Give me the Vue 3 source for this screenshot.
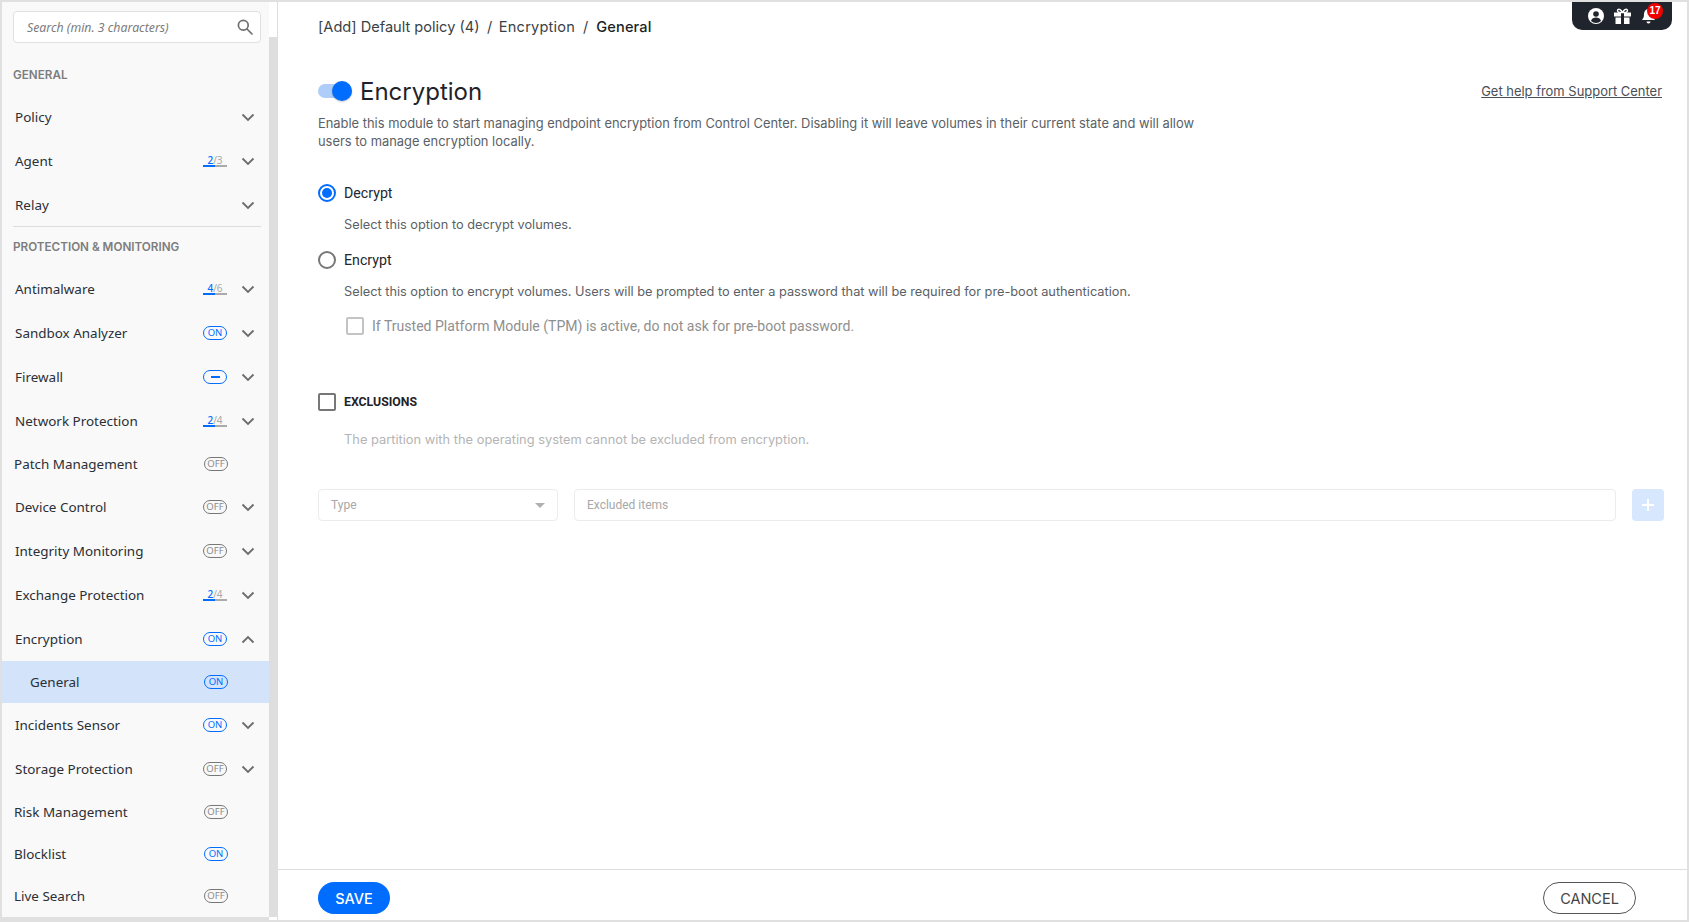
<script setup>
const general = [
  { name: 'Policy', chevron: 'down' },
  { name: 'Agent', progress: ['2', '3'], pct: 52, chevron: 'down' },
  { name: 'Relay', chevron: 'down' }
]
const protection = [
  { name: 'Antimalware', progress: ['4', '6'], pct: 52, chevron: 'down' },
  { name: 'Sandbox Analyzer', pill: 'ON', chevron: 'down' },
  { name: 'Firewall', pill: 'PART', chevron: 'down' },
  { name: 'Network Protection', progress: ['2', '4'], pct: 52, chevron: 'down' },
  { name: 'Patch Management', pill: 'OFF' },
  { name: 'Device Control', pill: 'OFF', chevron: 'down' },
  { name: 'Integrity Monitoring', pill: 'OFF', chevron: 'down' },
  { name: 'Exchange Protection', progress: ['2', '4'], pct: 52, chevron: 'down' },
  { name: 'Encryption', pill: 'ON', chevron: 'up' },
  { name: 'General', pill: 'ON', active: true },
  { name: 'Incidents Sensor', pill: 'ON', chevron: 'down' },
  { name: 'Storage Protection', pill: 'OFF', chevron: 'down' },
  { name: 'Risk Management', pill: 'OFF' },
  { name: 'Blocklist', pill: 'ON' },
  { name: 'Live Search', pill: 'OFF' }
]
</script>

<template>
  <div class="frame">
    <aside class="sidebar">
      <div class="search">
        <span class="search-text">Search (min. 3 characters)</span>
        <svg class="search-icon" width="16" height="16" viewBox="0 0 16 16" fill="none" stroke="#6f6f6f" stroke-width="1.7">
          <circle cx="6.3" cy="6.3" r="4.9" />
          <path d="M10 10l5 5" stroke-linecap="round" />
        </svg>
      </div>
      <div class="group-label first">GENERAL</div>
      <div v-for="item in general" :key="item.name" class="row tall">
        <span class="row-name">{{ item.name }}</span>
        <span v-if="item.progress" class="progress">
          <span class="progress-text"><b>{{ item.progress[0] }}</b>/{{ item.progress[1] }}</span>
          <span class="progress-bar"><span class="progress-fill" :style="{ width: item.pct + '%' }"></span></span>
        </span>
        <svg class="chev" width="14" height="9" viewBox="0 0 14 9" fill="none" stroke="#6e6e6e" stroke-width="1.9"><path d="M1.5 1.5L7 7l5.5-5.5" /></svg>
      </div>
      <div class="separator"></div>
      <div class="group-label second">PROTECTION &amp; MONITORING</div>
      <div
        v-for="item in protection"
        :key="item.name"
        class="row"
        :class="{ tall: item.chevron, flat: !item.chevron, active: item.active }"
      >
        <span class="row-name">{{ item.name }}</span>
        <span v-if="item.progress" class="progress">
          <span class="progress-text"><b>{{ item.progress[0] }}</b>/{{ item.progress[1] }}</span>
          <span class="progress-bar"><span class="progress-fill" :style="{ width: item.pct + '%' }"></span></span>
        </span>
        <span v-else-if="item.pill" class="pill" :class="item.pill === 'OFF' ? 'off' : 'on'">
          <span v-if="item.pill === 'PART'" class="dash"></span>
          <template v-else>{{ item.pill }}</template>
        </span>
        <svg v-if="item.chevron === 'down'" class="chev" width="14" height="9" viewBox="0 0 14 9" fill="none" stroke="#6e6e6e" stroke-width="1.9"><path d="M1.5 1.5L7 7l5.5-5.5" /></svg>
        <svg v-if="item.chevron === 'up'" class="chev" width="14" height="9" viewBox="0 0 14 9" fill="none" stroke="#6e6e6e" stroke-width="1.9"><path d="M1.5 7.5L7 2l5.5 5.5" /></svg>
      </div>
    </aside>

    <div class="scroll-col">
      <div class="scroll-cap"></div>
      <div class="scroll-track"></div>
      <div class="scroll-foot"></div>
    </div>

    <main class="main">
      <div class="topbar">
        <svg width="16" height="16" viewBox="0 0 16 16">
          <circle cx="8" cy="8" r="8" fill="#fff" />
          <circle cx="8" cy="6" r="2.8" fill="#20252d" />
          <path d="M3 13c.8-2.6 2.7-3.5 5-3.5s4.200.9 5 3.500a7 7 0 0 1-10 0z" fill="#20252d" />
        </svg>
        <svg width="17" height="16" viewBox="0 0 17 16">
          <path d="M0 4.500h17v4H0zM1.500 9.500h14V16h-14z" fill="#fff" />
          <path d="M7 4.500h3V16H7z" fill="#20252d" />
          <path d="M8.500 4.500C7 1.500 5 .8 4 1.500S3.700 4.500 5.500 4.500zM8.500 4.500c1.500-3 3.500-3.700 4.500-3S13.300 4.500 11.500 4.500z" fill="none" stroke="#fff" stroke-width="1.500" />
        </svg>
        <span class="bell">
          <svg width="15" height="16" viewBox="0 0 15 16">
            <path d="M7.500 1C4.500 1 3 3.500 3 6.500c0 2.500-.8 4-2 5.500h13c-1.200-1.500-2-3-2-5.500C12 3.500 10.500 1 7.500 1zM5.500 13.500a2 2 0 0 0 4 0z" fill="#fff" />
          </svg>
          <span class="badge">17</span>
        </span>
      </div>

      <div class="content">
        <nav class="crumbs">
          <span>[Add] Default policy (4)</span>
          <span class="slash first-slash">/</span>
          <span class="mid">Encryption</span>
          <span class="slash">/</span>
          <span class="current">General</span>
        </nav>

        <div class="title-row">
          <span class="toggle"><span class="knob"></span></span>
          <h1>Encryption</h1>
          <a class="help">Get help from Support Center</a>
        </div>
        <p class="intro">Enable this module to start managing endpoint encryption from Control Center. Disabling it will leave volumes in their current state and will allow<br />users to manage encryption locally.</p>

        <div class="option first-option">
          <span class="radio checked"><span class="dot"></span></span>
          <span class="option-label">Decrypt</span>
        </div>
        <p class="option-help">Select this option to decrypt volumes.</p>

        <div class="option second-option">
          <span class="radio"></span>
          <span class="option-label">Encrypt</span>
        </div>
        <p class="option-help">Select this option to encrypt volumes. Users will be prompted to enter a password that will be required for pre-boot authentication.</p>

        <div class="tpm">
          <span class="check muted"></span>
          <span>If Trusted Platform Module (TPM) is active, do not ask for pre-boot password.</span>
        </div>

        <div class="exclusions">
          <span class="check"></span>
          <span class="excl-label">EXCLUSIONS</span>
        </div>
        <p class="excl-help">The partition with the operating system cannot be excluded from encryption.</p>

        <div class="fields">
          <div class="field type">
            <span>Type</span>
            <span class="caret"></span>
          </div>
          <div class="field items"><span>Excluded items</span></div>
          <div class="add">
            <svg width="12" height="12" viewBox="0 0 12 12" stroke="#fff" stroke-width="2"><path d="M6 0v12M0 6h12" /></svg>
          </div>
        </div>
      </div>

      <footer class="footer">
        <button class="btn save">SAVE</button>
        <button class="btn cancel">CANCEL</button>
      </footer>
    </main>
  </div>
</template>

<style>
html, body { margin: 0; padding: 0; background: #e0e0e0; overflow: hidden; }
</style>

<style scoped>
.frame {
  display: flex;
  box-sizing: border-box;
  width: 1689px;
  height: 922px;
  padding: 2px;
  background: #e0e0e0;
  font-family: "Noto Sans", sans-serif;
  color: #2b2f36;
  overflow: hidden;
}
.sidebar {
  flex: 0 0 267px;
  height: 915px;
  box-sizing: border-box;
  padding-top: 9px;
  background: #f9f9f9;
  overflow: hidden;
}
.search {
  display: flex;
  align-items: center;
  justify-content: space-between;
  box-sizing: border-box;
  width: 248px;
  height: 32px;
  margin-left: 11px;
  padding: 0 7px 0 13px;
  background: #fff;
  border: 1px solid #e0e0e0;
  border-radius: 4px;
}
.search-text { font-size: 12.300px; font-style: italic; color: #7c7c7c; }
.group-label {
  margin-left: 11px;
  font-family: Inter, sans-serif;
  font-size: 11.700px;
  font-weight: 600;
  line-height: 14px;
  color: #7d7d7d;
}
.group-label.first { margin-top: 25px; height: 27px; }
.group-label.second { height: 27px; margin-top: 13px; }
.separator { height: 1px; margin: -1px 8px 0 11px; background: #dcdcdc; }
.row {
  display: flex;
  align-items: center;
  box-sizing: border-box;
  padding-left: 13px;
  font-size: 13.450px;
}
.row.tall { height: 44px; }
.row.flat { height: 42px; padding-left: 12px; }
.row.active { background: #d2e3fa; padding-left: 28px; }
.row-name { flex: 1; }
.chev { flex: none; margin: 0 14px 0 14px; }
.row.flat .pill, .row.flat .progress { margin-right: 41px; }
.pill {
  display: flex;
  align-items: center;
  justify-content: center;
  box-sizing: border-box;
  width: 24px;
  height: 14px;
  border-radius: 7px;
  font-size: 9.500px;
  line-height: 1;
  border: 1px solid;
}
.pill.on { color: #006dff; border-color: #006dff; }
.pill.off { color: #8a8a8a; border-color: #777; }
.dash { width: 9px; height: 2px; background: #006dff; }
.progress { display: flex; flex-direction: column; align-items: center; width: 24px; }
.progress-text { font-size: 10px; line-height: 10px; color: #a8a8a8; }
.progress-text b { font-weight: 500; color: #006dff; }
.progress-bar { display: block; width: 24px; height: 2px; background: #aaa; }
.progress-fill { display: block; height: 2px; background: #006dff; }
.scroll-col { flex: 0 0 8px; height: 918px; display: flex; flex-direction: column; }
.scroll-cap { height: 35px; background: #fff; }
.scroll-track { flex: 1; background: #dedede; }
.scroll-foot { height: 3px; background: #fff; }
.main {
  flex: 1;
  position: relative;
  display: flex;
  flex-direction: column;
  height: 918px;
  background: #fff;
  border-left: 1px solid #dedede;
  min-width: 0;
}
.topbar {
  position: absolute;
  top: 0;
  right: 15px;
  display: flex;
  align-items: center;
  gap: 10px;
  box-sizing: border-box;
  width: 100px;
  height: 28px;
  padding: 0 0 0 16px;
  background: #20252d;
  border-radius: 0 0 10px 10px;
}
.bell { position: relative; display: flex; }
.badge {
  position: absolute;
  top: -5px;
  left: 6px;
  width: 16px;
  height: 16px;
  border-radius: 50%;
  background: #f00000;
  color: #fff;
  font: 700 10px/16px "Liberation Sans", sans-serif;
  text-align: center;
}
.content {
  flex: 1;
  padding: 0 23px 0 40px;
  font-family: Inter, sans-serif;
}
.crumbs {
  display: flex;
  align-items: center;
  height: 50px;
  font-size: 14.600px;
  color: #3b3f46;
}
.slash { margin: 0 8px; }
.first-slash { margin: 0 6.500px 0 7.500px; }
.mid { letter-spacing: .2px; }
.current { color: #1c1f24; font-weight: 500; letter-spacing: .1px; }
.title-row {
  display: flex;
  align-items: center;
  height: 34px;
  margin-top: 22px;
}
.toggle {
  position: relative;
  width: 34px;
  height: 14px;
  border-radius: 7px;
  background: #aecdfa;
}
.knob {
  position: absolute;
  right: 0;
  top: -3px;
  width: 20px;
  height: 20px;
  border-radius: 50%;
  background: #006dff;
  box-shadow: 0 1px 2px rgba(0, 0, 0, .2);
}
h1 {
  margin: 0 0 0 8px;
  flex: 1;
  font-size: 24px;
  font-weight: 400;
  color: #1f2329;
}
.help { margin-right: 2px; font-size: 12.950px; color: #4a4f57; text-decoration: underline; }
.intro {
  margin: 7px 0 0;
  font-size: 12.900px;
  line-height: 18px;
  color: #5b5f66;
}
.option { display: flex; align-items: center; height: 20px; }
.first-option { margin-top: 32px; }
.second-option { margin-top: 15px; }
.radio {
  display: flex;
  align-items: center;
  justify-content: center;
  box-sizing: border-box;
  width: 18px;
  height: 18px;
  margin-right: 8px;
  border-radius: 50%;
  border: 2px solid #777;
}
.radio.checked { border-color: #006dff; }
.dot { width: 10px; height: 10px; border-radius: 50%; background: #006dff; }
.option-label { font-family: Roboto, sans-serif; font-size: 14.200px; color: #23272d; }
.option-help {
  margin: 12px 0 0 26px;
  font-size: 12.780px;
  line-height: 20px;
  color: #5b5f66;
}
.tpm {
  display: flex;
  align-items: center;
  height: 20px;
  margin: 14px 0 0 28px;
  font-family: Roboto, sans-serif;
  font-size: 14.050px;
  color: #8f8f8f;
}
.check {
  box-sizing: border-box;
  flex: none;
  width: 18px;
  height: 18px;
  border: 2px solid #777;
  border-radius: 2px;
}
.check.muted { border-color: #c4c4c4; margin-right: 8px; }
.exclusions { display: flex; align-items: center; height: 20px; margin-top: 56px; }
.excl-label {
  margin-left: 8px;
  font-family: Roboto, sans-serif;
  font-size: 12.300px;
  font-weight: 700;
  color: #1f2329;
}
.excl-help {
  margin: 18px 0 0 26px;
  font-size: 12.850px;
  line-height: 20px;
  color: #b4b4b4;
}
.fields { display: flex; align-items: center; margin-top: 39px; }
.field {
  display: flex;
  align-items: center;
  justify-content: space-between;
  box-sizing: border-box;
  height: 32px;
  padding: 0 12px;
  border: 1px solid #ececec;
  border-radius: 4px;
  font-family: Roboto, sans-serif;
  font-size: 12px;
  color: #a8a8a8;
}
.type { width: 240px; margin-right: 16px; }
.items { flex: 1; margin-right: 16px; }
.caret {
  width: 0;
  height: 0;
  border-left: 5px solid transparent;
  border-right: 5px solid transparent;
  border-top: 5px solid #b0b0b0;
}
.add {
  display: flex;
  align-items: center;
  justify-content: center;
  width: 32px;
  height: 32px;
  border-radius: 4px;
  background: #d7e7fd;
}
.footer {
  display: flex;
  align-items: flex-start;
  justify-content: space-between;
  box-sizing: border-box;
  height: 51px;
  padding: 12px 51px 0 40px;
  border-top: 1px solid #dedede;
}
.btn {
  height: 32px;
  border-radius: 16px;
  font-family: Inter, sans-serif;
  font-size: 14.500px;
  padding: 0;
  background: none;
}
.save { width: 72px; border: none; background: #006dff; color: #fff; font-weight: 500; }
.cancel { width: 93px; border: 1px solid #555; color: #444; }
</style>
